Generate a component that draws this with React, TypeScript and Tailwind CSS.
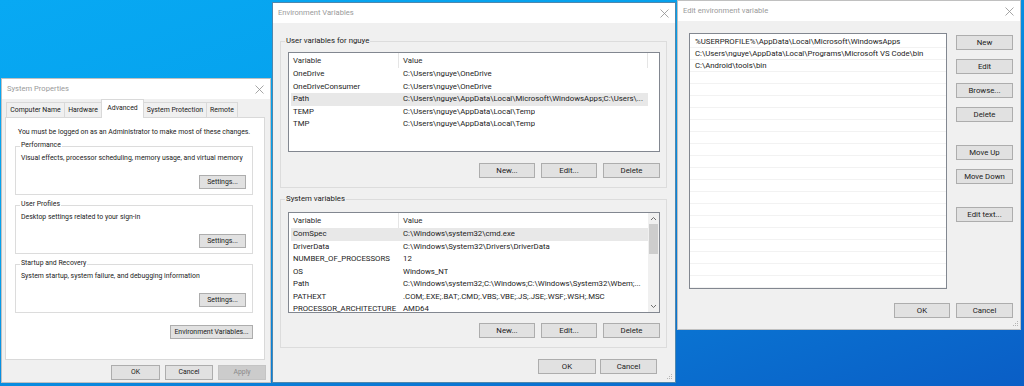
import React from "react";

type BtnProps = {
  children: React.ReactNode;
  w: string;
  h?: string;
  disabled?: boolean;
};

function Btn({ children, w, h = "h-[15px]", disabled = false }: BtnProps) {
  return (
    <div
      className={`flex shrink-0 items-center justify-center border leading-none ${
        disabled
          ? "border-[#c4c4c4] bg-[#cccccc] text-[#8a8a8a]"
          : "border-[#adadad] bg-[#e1e1e1] text-[#1b1b1b]"
      } ${w} ${h}`}
    >
      {children}
    </div>
  );
}

function CloseX() {
  return (
    <svg width="9" height="9" viewBox="0 0 9 9" className="shrink-0">
      <path d="M0.5 0.5L8.5 8.5M8.5 0.5L0.5 8.5" stroke="#8f8f8f" strokeWidth="0.8" />
    </svg>
  );
}

function TitleBar({ title }: { title: string }) {
  return (
    <div className="flex h-[20px] shrink-0 items-center justify-between bg-white pl-[5px] pr-[6px] text-[7.6px] text-[#9a9a9a]">
      <span>{title}</span>
      <CloseX />
    </div>
  );
}

function Grip() {
  return (
    <svg width="6" height="6" viewBox="0 0 6 6" className="shrink-0">
      <rect x="4" y="0" width="1" height="1" fill="#b5b5b5" />
      <rect x="2" y="2" width="1" height="1" fill="#b5b5b5" />
      <rect x="4" y="2" width="1" height="1" fill="#b5b5b5" />
      <rect x="0" y="4" width="1" height="1" fill="#b5b5b5" />
      <rect x="2" y="4" width="1" height="1" fill="#b5b5b5" />
      <rect x="4" y="4" width="1" height="1" fill="#b5b5b5" />
    </svg>
  );
}

function GroupBox({
  label,
  labelBg,
  children,
}: {
  label: string;
  labelBg: string;
  children: React.ReactNode;
}) {
  return (
    <div className="flex flex-col border border-[#dcdcdc]">
      <div className={`-mt-[6px] ml-[4px] h-[10px] w-fit px-[1px] leading-[10px] ${labelBg}`}>{label}</div>
      {children}
    </div>
  );
}

function PerfBox({ label, desc }: { label: string; desc: string }) {
  return (
    <div className="flex flex-col border border-[#dcdcdc]">
      <div className="-mt-[7px] ml-[4px] h-[10px] w-fit bg-white px-[1px] leading-[10px]">{label}</div>
      <div className="mt-[3px] h-[10px] pl-[5px] leading-[10px]">{desc}</div>
      <div className="mt-[12px] flex justify-end pr-[6px]">
        <Btn w="w-[47px]" h="h-[14px]">
          Settings...
        </Btn>
      </div>
      <div className="h-[5px]" />
    </div>
  );
}

function SystemProperties() {
  const tabs = [
    { name: "Computer Name", w: "w-[59px]" },
    { name: "Hardware", w: "w-[38px]" },
    { name: "Advanced", w: "w-[43px]", sel: true },
    { name: "System Protection", w: "w-[64px]" },
    { name: "Remote", w: "w-[32px]" },
  ];
  return (
    <div className="absolute left-[1px] top-[78px] flex h-[305px] w-[270px] flex-col border border-black/20 bg-[#f0f0f0]">
      <TitleBar title="System Properties" />
      <div className="flex flex-1 flex-col text-[6.9px]">
        <div className="flex h-[18px] items-end pl-[4px]">
          {tabs.map((t, i) => (
            <div
              key={t.name}
              className={`flex shrink-0 items-center justify-center border border-b-0 border-[#d9d9d9] leading-none ${t.w} ${
                i > 0 ? "-ml-px" : ""
              } ${t.sel ? "relative z-10 -mb-px h-[19px] bg-white pb-[2px]" : "h-[15px] bg-[#f0f0f0]"}`}
            >
              {t.name}
            </div>
          ))}
        </div>
        <div className="ml-[3px] flex h-[243px] w-[260px] flex-col border border-[#d9d9d9] bg-white">
          <div className="mt-[8px] h-[12px] pl-[12px] leading-[12px]">
            You must be logged on as an Administrator to make most of these changes.
          </div>
          <div className="ml-[9px] mt-[8px] flex w-[238px] flex-col gap-[10px]">
            <PerfBox label="Performance" desc="Visual effects, processor scheduling, memory usage, and virtual memory" />
            <PerfBox label="User Profiles" desc="Desktop settings related to your sign-in" />
            <PerfBox label="Startup and Recovery" desc="System startup, system failure, and debugging information" />
            <div className="mt-[2px] flex justify-end">
              <Btn w="w-[83px]" h="h-[14px]">
                Environment Variables...
              </Btn>
            </div>
          </div>
        </div>
        <div className="mt-[5px] flex justify-end gap-[5px] pr-[4px]">
          <Btn w="w-[49px]">OK</Btn>
          <Btn w="w-[48px]">Cancel</Btn>
          <Btn w="w-[48px]" disabled>
            Apply
          </Btn>
        </div>
      </div>
    </div>
  );
}

type Row = { name: string; value: string; sel?: boolean };

function VarList({ rows, h, scroll }: { rows: Row[]; h: string; scroll?: boolean }) {
  return (
    <div className={`ml-[7px] flex w-[372px] overflow-hidden border border-[#828790] bg-white ${h}`}>
      <div className="flex min-w-0 flex-1 flex-col">
        <div className="flex h-[15px] shrink-0 items-center text-[#2b2b2b]">
          <div className="flex h-full w-[110px] items-center border-r border-[#e5e5e5] pl-[4px]">Variable</div>
          <div className={`flex h-full w-[249px] items-center pl-[4px] ${scroll ? "" : "border-r border-[#e5e5e5]"}`}>Value</div>
        </div>
        <div className="flex flex-col pl-[2px]">
          {rows.map((r) => (
            <div
              key={r.name}
              className={`flex h-[12.5px] w-[357px] shrink-0 items-center ${r.sel ? "bg-[#e8e8e8]" : ""}`}
            >
              <div className="w-[108px] shrink-0 overflow-hidden pl-[2px]">{r.name}</div>
              <div className="overflow-hidden pl-[4px]">{r.value}</div>
            </div>
          ))}
        </div>
      </div>
      {scroll && (
        <div className="flex w-[11px] shrink-0 flex-col items-center bg-[#f0f0f0]">
          <svg width="7" height="11" viewBox="0 0 7 11" className="shrink-0">
            <path d="M1 7L3.5 4.5L6 7" stroke="#606060" strokeWidth="0.9" fill="none" />
          </svg>
          <div className="h-[30px] w-[9px] bg-[#cdcdcd]" />
          <div className="flex-1" />
          <svg width="7" height="11" viewBox="0 0 7 11" className="shrink-0">
            <path d="M1 4L3.5 6.5L6 4" stroke="#606060" strokeWidth="0.9" fill="none" />
          </svg>
        </div>
      )}
    </div>
  );
}

function EnvVariables() {
  const userRows: Row[] = [
    { name: "OneDrive", value: "C:\\Users\\nguye\\OneDrive" },
    { name: "OneDriveConsumer", value: "C:\\Users\\nguye\\OneDrive" },
    { name: "Path", value: "C:\\Users\\nguye\\AppData\\Local\\Microsoft\\WindowsApps;C:\\Users\\...", sel: true },
    { name: "TEMP", value: "C:\\Users\\nguye\\AppData\\Local\\Temp" },
    { name: "TMP", value: "C:\\Users\\nguye\\AppData\\Local\\Temp" },
  ];
  const sysRows: Row[] = [
    { name: "ComSpec", value: "C:\\Windows\\system32\\cmd.exe", sel: true },
    { name: "DriverData", value: "C:\\Windows\\System32\\Drivers\\DriverData" },
    { name: "NUMBER_OF_PROCESSORS", value: "12" },
    { name: "OS", value: "Windows_NT" },
    { name: "Path", value: "C:\\Windows\\system32;C:\\Windows;C:\\Windows\\System32\\Wbem;..." },
    { name: "PATHEXT", value: ".COM;.EXE;.BAT;.CMD;.VBS;.VBE;.JS;.JSE;.WSF;.WSH;.MSC" },
    { name: "PROCESSOR_ARCHITECTURE", value: "AMD64" },
  ];
  return (
    <div className="absolute left-[272px] top-[2px] flex h-[381px] w-[404px] flex-col border border-[#4f87ad] bg-[#f0f0f0]">
      <TitleBar title="Environment Variables" />
      <div className="flex flex-1 flex-col pl-[7px] pr-[8px]">
        <div className="mt-[18px]">
          <GroupBox label="User variables for nguye" labelBg="bg-[#f0f0f0]">
            <div className="mt-[6px]">
              <VarList rows={userRows} h="h-[100px]" />
            </div>
            <div className="mt-[11px] flex justify-end gap-[6px] pr-[6px]">
              <Btn w="w-[56px]">New...</Btn>
              <Btn w="w-[56px]">Edit...</Btn>
              <Btn w="w-[57px]">Delete</Btn>
            </div>
            <div className="h-[9px]" />
          </GroupBox>
        </div>
        <div className="mt-[11px]">
          <GroupBox label="System variables" labelBg="bg-[#f0f0f0]">
            <div className="mt-[8px]">
              <VarList rows={sysRows} h="h-[101px]" scroll />
            </div>
            <div className="mt-[10px] flex justify-end gap-[6px] pr-[6px]">
              <Btn w="w-[56px]">New...</Btn>
              <Btn w="w-[56px]">Edit...</Btn>
              <Btn w="w-[57px]">Delete</Btn>
            </div>
            <div className="h-[9px]" />
          </GroupBox>
        </div>
        <div className="mr-[10px] mt-[11px] flex justify-end gap-[4px]">
          <Btn w="w-[58px]">OK</Btn>
          <Btn w="w-[57px]">Cancel</Btn>
        </div>
        <div className="flex flex-1 items-end justify-end pb-[2px]">
          <div className="-mr-[6px]">
            <Grip />
          </div>
        </div>
      </div>
    </div>
  );
}

function EditEnv() {
  const entries = [
    "%USERPROFILE%\\AppData\\Local\\Microsoft\\WindowsApps",
    "C:\\Users\\nguye\\AppData\\Local\\Programs\\Microsoft VS Code\\bin",
    "C:\\Android\\tools\\bin",
  ];
  const rows = Array.from({ length: 21 }, (_, i) => entries[i] ?? "");
  return (
    <div className="absolute left-[677px] top-[0px] flex h-[330px] w-[344px] flex-col border border-black/20 bg-[#f0f0f0]">
      <TitleBar title="Edit environment variable" />
      <div className="flex flex-1 flex-col pl-[11px] pr-[7px]">
        <div className="mt-[12px] flex">
          <div className="flex h-[256px] w-[258px] shrink-0 flex-col overflow-hidden border border-[#828790] bg-white pt-[2px]">
            {rows.map((r, i) => (
              <div
                key={i}
                className="flex h-[12px] shrink-0 items-center border-b border-[#f2f2f2] pl-[5px]"
              >
                {r}
              </div>
            ))}
          </div>
          <div className="ml-[9px] mt-[2px] flex w-[57px] flex-col">
            <Btn w="w-[57px]">New</Btn>
            <div className="h-[9px]" />
            <Btn w="w-[57px]">Edit</Btn>
            <div className="h-[9px]" />
            <Btn w="w-[57px]">Browse...</Btn>
            <div className="h-[9px]" />
            <Btn w="w-[57px]">Delete</Btn>
            <div className="h-[23px]" />
            <Btn w="w-[57px]">Move Up</Btn>
            <div className="h-[9px]" />
            <Btn w="w-[57px]">Move Down</Btn>
            <div className="h-[23px]" />
            <Btn w="w-[57px]">Edit text...</Btn>
          </div>
        </div>
        <div className="mt-[14px] flex justify-end gap-[6px]">
          <Btn w="w-[56px]">OK</Btn>
          <Btn w="w-[57px]">Cancel</Btn>
        </div>
        <div className="flex flex-1 items-end justify-end pb-[2px]">
          <div className="-mr-[6px]">
            <Grip />
          </div>
        </div>
      </div>
    </div>
  );
}

export default function App() {
  return (
    <div className="relative h-[386px] w-[1024px] overflow-hidden whitespace-nowrap bg-[linear-gradient(160deg,#08a9f3_0%,#05a0ec_35%,#0a7fd8_62%,#0a5ec6_100%)] font-['Roboto',sans-serif] text-[7.8px] text-[#1b1b1b]">
      <SystemProperties />
      <EnvVariables />
      <EditEnv />
    </div>
  );
}
